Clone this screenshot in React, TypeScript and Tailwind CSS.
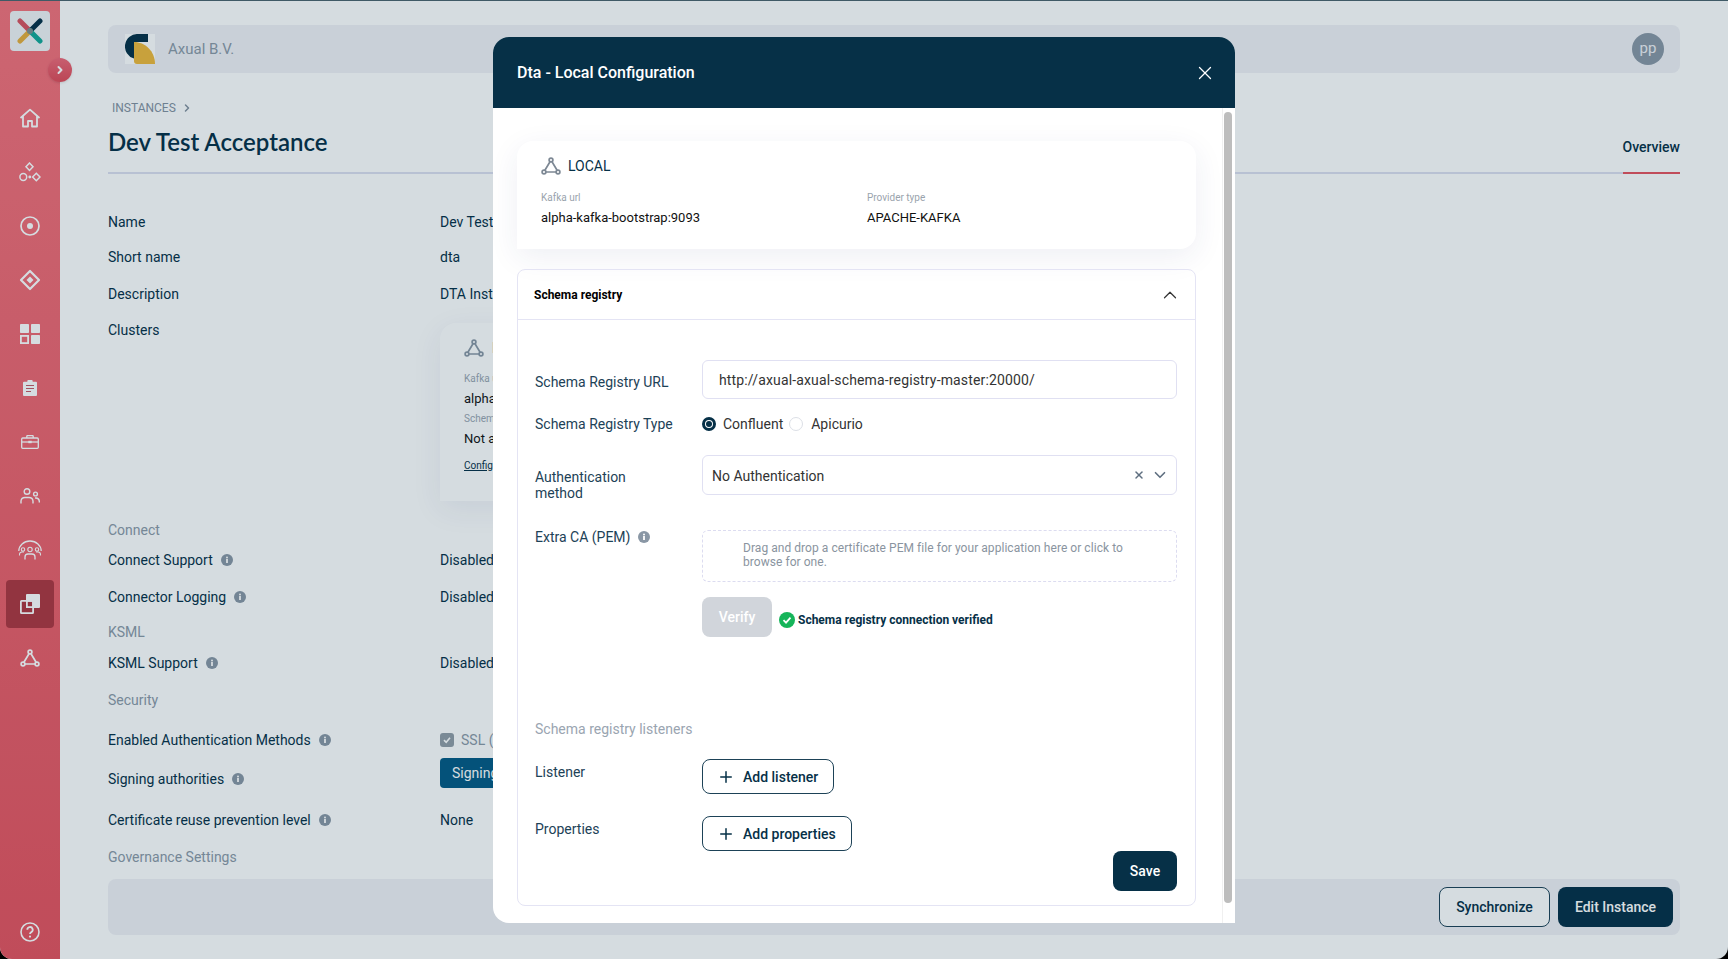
import type { ReactNode } from "react";
import { ChevronDown, ChevronRight, ChevronUp, Plus, X } from "lucide-react";

const Info = () => (
  <svg viewBox="0 0 12 12" className="ml-2 h-3 w-3 shrink-0">
    <circle cx="6" cy="6" r="6" fill="#8a97a5" />
    <rect x="5.1" y="5" width="1.8" height="4" fill="#fff" />
    <circle cx="6" cy="3.4" r="1" fill="#fff" />
  </svg>
);

const ClusterIcon = ({ className }: { className: string }) => (
  <svg viewBox="0 0 20 18" fill="none" stroke="currentColor" strokeWidth="1.7" className={className}>
    <circle cx="10" cy="3" r="1.9" />
    <circle cx="3" cy="15" r="1.9" />
    <circle cx="17" cy="15" r="1.9" />
    <path d="M9 4.8 3.9 13.3M11 4.8l5.1 8.5M5 15h10" />
  </svg>
);

const navIcons: ReactNode[] = [
  <svg viewBox="0 0 22 20" fill="none" stroke="currentColor" strokeWidth="1.8" className="h-[20px] w-[22px]" key="home">
    <path d="M1.5 10 11 1.6 20.5 10M4 8v10.5h5V13h4v5.5h5V8" strokeLinejoin="round" />
  </svg>,
  <svg viewBox="0 0 22 20" fill="none" stroke="currentColor" strokeWidth="1.5" className="h-[20px] w-[22px]" key="shapes">
    <path d="M10.5 1 14 4.7l-3.5 3.7L7 4.700z" />
    <circle cx="4.300" cy="15" r="3.400" />
    <path d="M17.300 11.300 21 15l-3.700 3.700L13.600 15z" />
    <circle cx="10.800" cy="15" r=".7" fill="currentColor" />
  </svg>,
  <svg viewBox="0 0 20 20" fill="none" stroke="currentColor" strokeWidth="1.7" className="h-5 w-5" key="target">
    <circle cx="10" cy="10" r="9" />
    <circle cx="10" cy="10" r="3" fill="currentColor" stroke="none" />
  </svg>,
  <svg viewBox="0 0 22 22" fill="none" stroke="currentColor" strokeWidth="2.200" className="h-[22px] w-[22px]" key="diamond">
    <path d="M11 2 20 11l-9 9-9-9z" strokeLinejoin="round" />
    <path d="M11 7.500 14.500 11 11 14.500 7.500 11z" fill="currentColor" stroke="none" />
  </svg>,
  <svg viewBox="0 0 20 20" className="h-5 w-5" fill="currentColor" key="grid">
    <rect width="9" height="9" rx=".8" />
    <rect x="11" width="9" height="9" rx=".8" />
    <rect x="11" y="11" width="9" height="9" rx=".8" />
    <rect x=".9" y="11.900" width="7.200" height="7.200" fill="none" stroke="currentColor" strokeWidth="1.800" />
  </svg>,
  <svg viewBox="0 0 14 16" className="h-4 w-[14px]" key="clipboard">
    <path fill="currentColor" d="M1 1.800h3.300a2.700 2.700 0 0 1 5.400 0H13a1 1 0 0 1 1 1V15a1 1 0 0 1-1 1H1a1 1 0 0 1-1-1V2.800a1 1 0 0 1 1-1z" />
    <path stroke="#c45a66" strokeWidth="1.200" d="M3 5.500h8M3 8.500h8M3 11.500h5" />
  </svg>,
  <svg viewBox="0 0 18 14" fill="none" stroke="currentColor" strokeWidth="1.300" className="h-[14px] w-[18px]" key="toolbox">
    <path d="M5.800 3V1.500a1 1 0 0 1 1-1h4.400a1 1 0 0 1 1 1V3" />
    <rect x=".7" y="3" width="16.600" height="10.300" rx="1" />
    <path d="M.7 7h16.600" />
    <rect x="7.300" y="5.800" width="3.400" height="2.400" fill="currentColor" stroke="none" />
  </svg>,
  <svg viewBox="0 0 20 16" fill="none" stroke="currentColor" strokeWidth="1.400" className="h-4 w-5" key="users">
    <circle cx="7" cy="3.500" r="2.800" />
    <circle cx="15.500" cy="6" r="1.900" />
    <path d="M1 15.500V13a4 4 0 0 1 4-3.500h4a4 4 0 0 1 4 3.500v2.500M15 10h1a3.500 3.500 0 0 1 3.300 3v1.500" />
  </svg>,
  <svg viewBox="0 0 24 20" fill="none" stroke="currentColor" strokeWidth="1.100" className="h-5 w-6" key="group">
    <path d="M.8 11a11.200 10 0 0 1 22.400 0" strokeWidth="1.300" />
    <circle cx="12" cy="9.500" r="2.200" />
    <circle cx="5" cy="9.500" r="1.700" />
    <circle cx="19" cy="9.500" r="1.700" />
    <path d="M7 19.500V17a3 3 0 0 1 3-3h4a3 3 0 0 1 3 3v2.500" strokeWidth="1.300" />
    <path d="M1.500 15.500v-1a2.500 2.500 0 0 1 2.500-2.500h2M22.500 15.500v-1A2.500 2.500 0 0 0 20 12h-2" />
  </svg>,
  <svg viewBox="0 0 20 20" className="h-5 w-5" key="copy">
    <path fill="currentColor" d="M6 1a1 1 0 0 1 1-1h12a1 1 0 0 1 1 1v12a1 1 0 0 1-1 1h-5V7a1 1 0 0 0-1-1H6z" />
    <rect x=".9" y="6.900" width="12.200" height="12.200" rx=".6" fill="none" stroke="currentColor" strokeWidth="1.800" />
    <rect x="6.900" y="6.900" width="6.200" height="6.200" fill="none" stroke="currentColor" strokeWidth="1.800" />
  </svg>,
  <ClusterIcon className="h-[18px] w-5" key="cluster" />,
];

type Row = { label: string; value?: ReactNode; info?: boolean; height: string };

const Label = ({ text, info }: { text: string; info?: boolean }) => (
  <div className="flex w-[332px] shrink-0 items-center text-[#063047]">
    {text}
    {info && <Info />}
  </div>
);

const DetailRow = ({ label, value, info, height }: Row) => (
  <div className={`flex items-center ${height}`}>
    <Label text={label} info={info} />
    <div className="text-[#063047]">{value}</div>
  </div>
);

const SectionRow = ({ label, height }: { label: string; height: string }) => (
  <div className={`flex items-center text-[#8c99a7] ${height}`}>{label}</div>
);

const ClusterCard = () => (
  <div className="mt-[11px] h-[178px] w-[700px] rounded-t-2xl rounded-br-2xl bg-white px-6 pt-[15px] shadow-[0_8px_30px_rgba(40,50,110,0.08)]">
    <div className="flex items-center gap-2 text-[#063047]">
      <ClusterIcon className="h-[18px] w-5 text-[#8a97a5]" />
      <span>LOCAL</span>
    </div>
    <p className="mt-[15px] text-[10px] leading-3 text-[#9aa5b1]">Kafka url</p>
    <p className="mt-[6px] text-[13px] leading-4 text-[#111]">alpha-kafka-bootstrap:9093</p>
    <p className="mt-[6px] text-[10px] leading-3 text-[#9aa5b1]">Schema registry</p>
    <p className="mt-[6px] text-[13px] leading-4 text-[#111]">Not available</p>
    <p className="mt-[13px] text-[10px] leading-3 text-[#063047] underline">Configure</p>
  </div>
);

const OutlineButton = ({ children }: { children: ReactNode }) => (
  <button className="flex h-[35px] items-center gap-2 rounded-lg border border-[#1d4257] bg-white pl-[14px] pr-[15px] text-sm font-medium text-[#063047]">
    <Plus className="h-[18px] w-[18px]" strokeWidth={2} />
    {children}
  </button>
);

const Modal = () => (
  <div className="absolute left-[493px] top-[36px] flex h-[886px] w-[742px] flex-col overflow-hidden rounded-t-2xl rounded-bl-2xl bg-white">
    <div className="flex h-[71px] shrink-0 items-center justify-between bg-[#063047] pl-6 pr-[19px] text-white">
      <h2 className="mt-[1px] text-base font-medium">Dta - Local Configuration</h2>
      <X className="h-[22px] w-[22px]" strokeWidth={1.4} />
    </div>
    <div className="flex min-h-0 flex-1">
      <div className="w-[729px] pl-6 pr-[26px] pt-[33px]">
        <div className="h-[108px] rounded-t-2xl rounded-br-2xl bg-white px-6 pt-[15px] shadow-[0_8px_30px_rgba(40,50,110,0.08)]">
          <div className="flex items-center gap-[7px]">
            <ClusterIcon className="h-[18px] w-5 text-[#7d8894]" />
            <span className="text-sm text-[#063047]">LOCAL</span>
          </div>
          <div className="mt-4 flex">
            <div className="w-[326px]">
              <p className="text-[10px] leading-3 text-[#9aa3ad]">Kafka url</p>
              <p className="mt-[6px] text-[13px] leading-4 text-[#111]">alpha-kafka-bootstrap:9093</p>
            </div>
            <div>
              <p className="text-[10px] leading-3 text-[#9aa3ad]">Provider type</p>
              <p className="mt-[6px] text-[13px] leading-4 text-[#111]">APACHE-KAFKA</p>
            </div>
          </div>
        </div>

        <div className="mt-5 h-[637px] rounded-lg border border-[#e4e4f4]">
          <div className="flex h-[50px] items-center justify-between border-b border-[#e4e4f4] pl-4 pr-[14px]">
            <span className="text-xs font-bold text-black">Schema registry</span>
            <ChevronUp className="h-[22px] w-[22px] text-[#333]" strokeWidth={1.3} />
          </div>
          <div className="flex flex-col pl-[17px] pr-[18px] pt-[40px] text-sm text-[#1d4257]">
            <div className="flex">
              <div className="w-[167px] pt-[12px] leading-5">Schema Registry URL</div>
              <div className="flex h-[39px] flex-1 items-center rounded-md border border-[#e0e0f2] pl-4 tracking-[0.15px] text-[#333]">
                http://axual-axual-schema-registry-master:20000/
              </div>
            </div>

            <div className="mt-[15px] flex h-5 items-center">
              <div className="w-[167px]">Schema Registry Type</div>
              <span className="flex h-[14px] w-[14px] items-center justify-center rounded-full border-[3px] border-[#063047]">
                <span className="h-[6px] w-[6px] rounded-full bg-[#063047]" />
              </span>
              <span className="ml-[7px] text-[#333]">Confluent</span>
              <span className="ml-[6px] h-[14px] w-[14px] rounded-full border border-[#dcdfe6]" />
              <span className="ml-2 text-[#333]">Apicurio</span>
            </div>

            <div className="mt-[21px] flex h-10">
              <div className="w-[167px] pt-[14px] leading-4">
                <div className="w-[110px]">Authentication method</div>
              </div>
              <div className="flex h-10 flex-1 items-center rounded-md border border-[#e0e0f2] pl-[9px] pr-[7px] text-[#333]">
                <span className="mt-[1px] flex-1">No Authentication</span>
                <X className="h-3 w-3 text-[#5f6f80]" strokeWidth={3} />
                <ChevronDown className="ml-[6px] h-[18px] w-[18px] text-[#5f6f80]" strokeWidth={2.2} />
              </div>
            </div>

            <div className="mt-[35px] flex">
              <div className="-mt-[3px] flex h-5 w-[167px] items-center">
                Extra CA (PEM)
                <Info />
              </div>
              <div className="flex h-[52px] flex-1 items-center rounded-md border border-dashed border-[#dcdcf0] pb-[2px] pl-10 pr-10 text-xs leading-[14px] tracking-[0.05px] text-[#8a94a0]">
                Drag and drop a certificate PEM file for your application here or click to browse for one.
              </div>
            </div>

            <div className="ml-[167px] mt-[15px] flex items-center">
              <button className="h-10 w-[70px] rounded-lg bg-[#d1d5db] text-sm font-medium text-white">Verify</button>
              <svg viewBox="0 0 16 16" className="ml-[7px] mt-[6px] h-4 w-4">
                <circle cx="8" cy="8" r="8" fill="#16b55a" />
                <path d="M4.500 8.200 7 10.700l4.500-5" fill="none" stroke="#fff" strokeWidth="1.800" />
              </svg>
              <span className="ml-[3px] mt-[6px] text-xs font-bold text-[#063047]">Schema registry connection verified</span>
            </div>

            <div className="mt-[82px] leading-5 text-[#9aa5b1]">Schema registry listeners</div>

            <div className="mt-[20px] flex">
              <div className="w-[167px] pt-[3px] leading-5">Listener</div>
              <OutlineButton>Add listener</OutlineButton>
            </div>
            <div className="mt-[22px] flex">
              <div className="w-[167px] pt-[3px] leading-5">Properties</div>
              <OutlineButton>Add properties</OutlineButton>
            </div>

            <button className="h-10 w-16 self-end rounded-lg bg-[#063047] text-sm font-medium text-white">Save</button>
          </div>
        </div>
      </div>
      <div className="flex-1 border-l border-[#f0f0f0] pl-[1px] pt-[4px]">
        <div className="h-[791px] w-2 rounded-full bg-[#bdbdbd]" />
      </div>
    </div>
  </div>
);

export default function App() {
  return (
    <div className="bg-black font-['Roboto',sans-serif]">
      <div className="relative h-[959px] w-[1728px] overflow-hidden rounded-b-xl border-t border-[#3f5a66] bg-white text-sm">
        <div className="flex h-full">
          <aside className="flex w-[60px] shrink-0 flex-col items-center bg-gradient-to-b from-[#f5717b] to-[#e6525e] text-white">
            <div className="mt-[10px] flex h-10 w-10 items-center justify-center rounded bg-[#f1f3f6]">
              <svg viewBox="0 0 26 26" className="h-[26px] w-[26px]" fill="none" strokeWidth="5" strokeLinecap="round">
                <path d="M3 3 13 13" stroke="#d9525f" />
                <path d="M23 3 13 13" stroke="#063047" />
                <path d="M3 23 13 13" stroke="#e6ae3c" />
                <path d="M23 23 13 13" stroke="#14a898" />
                <circle cx="13" cy="13" r="3" fill="#7f8f90" />
              </svg>
            </div>
            <nav className="mt-[43px] flex flex-col gap-[6px]">
              {navIcons.map((icon, i) => (
                <div
                  key={i}
                  className={`flex h-12 w-12 items-center justify-center rounded ${i === 9 ? "bg-[#af353f]" : ""}`}
                >
                  {icon}
                </div>
              ))}
            </nav>
            <div className="mb-[3px] mt-auto flex h-12 w-12 items-center justify-center">
              <svg viewBox="0 0 20 20" fill="none" stroke="currentColor" strokeWidth="1.600" className="h-5 w-5">
                <circle cx="10" cy="10" r="9" />
                <path d="M7.300 7.800a2.700 2.700 0 1 1 4 2.300c-.9.500-1.300 1-1.300 1.900" strokeWidth="1.800" />
                <circle cx="10" cy="14.600" r="1.100" fill="currentColor" stroke="none" />
              </svg>
            </div>
          </aside>

          <main className="flex min-w-0 flex-1 flex-col px-12 pt-6">
            <header className="flex h-12 shrink-0 items-center rounded-lg bg-[#f1f1f6] pl-[17px] pr-4">
              <svg viewBox="0 0 30 30" className="h-[30px] w-[30px]">
                <rect width="30" height="30" fill="#fff" />
                <path d="M13 0h10v8H9v16.500A12.500 12.500 0 0 1 13 0z" fill="#063047" />
                <path d="M9 8c11 0 21 9 21 22H12a3 3 0 0 1-3-3z" fill="#f0b93a" />
              </svg>
              <span className="ml-[13px] mt-[2px] flex-1 text-[15px] text-[#8c99a7]">Axual B.V.</span>
              <span className="flex h-8 w-8 items-center justify-center rounded-full bg-[#8a97a5] text-[15px] text-[#f1f1f6]">pp</span>
            </header>

            <div className="mt-[27px] flex h-4 items-center pl-1 text-xs text-[#84919f]">
              INSTANCES
              <ChevronRight className="ml-[5px] h-3 w-3" strokeWidth={3} />
            </div>
            <div className="flex h-[58px] shrink-0 items-end justify-between border-b-2 border-[#dcdff0]">
              <h1 className="pb-3 font-['Lato',sans-serif] text-2xl font-semibold leading-9 text-[#063047]">Dev Test Acceptance</h1>
              <div className="-mb-[2px] border-b-2 border-[#e6525e] pb-[15px] font-medium leading-5 text-[#063047]">Overview</div>
            </div>

            <div className="mt-[30px] flex flex-col">
              <DetailRow label="Name" value="Dev Test Acceptance" height="h-[35px]" />
              <DetailRow label="Short name" value="dta" height="h-[36px]" />
              <DetailRow label="Description" value="DTA Instance" height="h-[37px]" />
              <div className="flex h-[205px] items-start">
                <div className="w-[332px] pt-2 leading-5 text-[#063047]">Clusters</div>
                <ClusterCard />
              </div>
              <SectionRow label="Connect" height="h-[25px]" />
              <DetailRow label="Connect Support" info value="Disabled" height="h-[36px]" />
              <DetailRow label="Connector Logging" info value="Disabled" height="h-[37px]" />
              <SectionRow label="KSML" height="h-[34px]" />
              <DetailRow label="KSML Support" info value="Disabled" height="h-[27px]" />
              <SectionRow label="Security" height="h-[47px]" />
              <DetailRow
                label="Enabled Authentication Methods"
                info
                height="h-[33px]"
                value={
                  <div className="flex items-center gap-[7px] text-[#8c99a7]">
                    <span className="flex h-[14px] w-[14px] items-center justify-center rounded-[3px] bg-[#929da7]">
                      <svg viewBox="0 0 10 10" className="h-[10px] w-[10px]" fill="none" stroke="#fff" strokeWidth="1.600">
                        <path d="M2 5.200 4.200 7.300 8 2.800" />
                      </svg>
                    </span>
                    SSL (mutual TLS)
                  </div>
                }
              />
              <div className="flex h-[46px] items-center">
                <Label text="Signing authorities" info />
                <button className="-mt-3 h-[30px] rounded bg-[#045a85] px-3 text-white">Signing authorities</button>
              </div>
              <DetailRow label="Certificate reuse prevention level" info value="None" height="h-[35px]" />
              <SectionRow label="Governance Settings" height="h-[39px]" />
            </div>

            <div className="mt-[3px] flex h-[56px] shrink-0 items-center justify-end gap-2 rounded-lg bg-[#f1f1f6] pr-[7px]">
              <button className="h-10 w-[111px] rounded-lg border border-[#1d4257] bg-white font-medium text-[#063047]">Synchronize</button>
              <button className="h-10 w-[115px] rounded-lg bg-[#063047] font-medium text-white">Edit Instance</button>
            </div>
          </main>
        </div>

        <button className="absolute left-[48px] top-[57px] flex h-6 w-6 items-center justify-center rounded-full bg-gradient-to-b from-[#ef6878] to-[#e04a58] text-white shadow">
          <ChevronRight className="h-3 w-3" strokeWidth={4} />
        </button>

        <div className="absolute inset-0 bg-[#063047]/[0.17]" />
        <Modal />
      </div>
    </div>
  );
}
